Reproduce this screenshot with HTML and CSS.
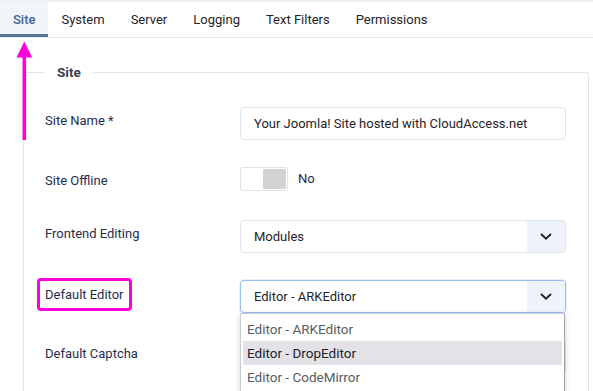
FILE: index.html
```html
<!DOCTYPE html>
<html lang="en">
<head>
<meta charset="utf-8">
<title>Global Configuration</title>
<link rel="stylesheet" href="styles.css">
</head>
<body>
<div class="topstrip"></div>
<nav class="tabs">
  <a class="tab active">Site</a>
  <a class="tab">System</a>
  <a class="tab">Server</a>
  <a class="tab">Logging</a>
  <a class="tab">Text Filters</a>
  <a class="tab">Permissions</a>
</nav>
<main class="content">
  <fieldset class="panel">
    <legend class="legend">Site</legend>
    <div class="row">
      <label class="lbl">Site Name *</label>
      <div class="field">Your Joomla! Site hosted with CloudAccess.net</div>
    </div>
    <div class="row row-toggle">
      <label class="lbl">Site Offline</label>
      <div class="switch-wrap">
        <span class="switch"><span class="knob"></span></span>
        <span class="switch-text">No</span>
      </div>
    </div>
    <div class="row">
      <label class="lbl">Frontend Editing</label>
      <div class="select"><span class="val">Modules</span><span class="caret"><svg width="14" height="9" viewBox="0 0 14 9"><path d="M2 2 L7 6.8 L12 2" fill="none" stroke="#1d2430" stroke-width="1.9"/></svg></span></div>
    </div>
    <div class="row">
      <label class="lbl"><span class="annot">Default Editor</span></label>
      <div class="select-holder">
        <div class="select focus"><span class="val">Editor - ARKEditor</span><span class="caret"><svg width="14" height="9" viewBox="0 0 14 9"><path d="M2 2 L7 6.8 L12 2" fill="none" stroke="#1d2430" stroke-width="1.9"/></svg></span></div>
        <ul class="menu">
          <li class="opt">Editor - ARKEditor</li>
          <li class="opt hover">Editor - DropEditor</li>
          <li class="opt">Editor - CodeMirror</li>
        </ul>
      </div>
    </div>
    <div class="row">
      <label class="lbl">Default Captcha</label>
      <div class="select"><span class="val"></span><span class="caret"></span></div>
    </div>
  </fieldset>
</main>
<svg class="arrow" width="40" height="150" viewBox="0 0 40 150">
  <line x1="24.3" y1="54" x2="24.3" y2="140" stroke="#ff00dc" stroke-width="3.6"/>
  <polygon points="24.3,41.5 16.5,57.5 32.2,57.5" fill="#ff00dc"/>
</svg>
</body>
</html>
```

FILE: styles.css
```css
html, body {
  margin: 0;
  padding: 0;
}
body {
  font-family: Roboto, "Noto Sans", sans-serif;
  font-size: 13px;
  color: #22314f;
  background: #ffffff;
  overflow: hidden;
  position: relative;
  height: 391px;
}
.topstrip {
  height: 2px;
  background: #eef1f6;
}
.tabs {
  display: flex;
  border-bottom: 1px solid #e4e9f1;
}
.tab {
  display: block;
  height: 35px;
  line-height: 35px;
  padding: 0 13px;
  color: #1f2329;
  text-decoration: none;
}
.tab.active {
  background: #f1f4f9;
  color: #45638f;
  font-weight: 500;
  box-shadow: inset 0 -3px 0 #5b7495;
}
.content {
  padding: 24px 4px 0 23px;
}
.panel {
  margin: 0;
  border: 1px solid #dfe5ee;
  border-bottom: none;
  border-radius: 3px 3px 0 0;
  padding: 25px 22px 0 21px;
  min-height: 330px;
  min-width: 0;
}
.legend {
  padding: 0 12px;
  font-weight: 700;
  font-size: 13.5px;
  line-height: 20px;
  color: #363f4c;
}
.row {
  display: grid;
  grid-template-columns: 195px 1fr;
  align-items: start;
  margin-bottom: 27px;
}
.row-toggle {
  min-height: 26px;
}
.lbl {
  display: block;
  padding-top: 3px;
  line-height: 21px;
  height: 21px;
  color: #1f2e4d;
}
.annot {
  display: inline-block;
  vertical-align: top;
  margin: -5px -8px 0;
  padding: 5px;
  line-height: 17px;
  border: 3px solid #ff00dc;
  border-radius: 4px;
}
.field {
  box-sizing: border-box;
  height: 33px;
  border: 1px solid #dfe3eb;
  border-radius: 4px;
  padding: 0 13px;
  line-height: 31px;
  color: #1f232b;
  white-space: nowrap;
  overflow: hidden;
}
.switch-wrap {
  display: flex;
  align-items: center;
  gap: 10px;
}
.switch {
  box-sizing: border-box;
  width: 48px;
  height: 24px;
  border: 1px solid #dde3ec;
  border-radius: 3px;
  background: #ffffff;
  display: flex;
  justify-content: flex-end;
  padding: 1px;
}
.knob {
  width: 23px;
  height: 100%;
  background: #d3d3d3;
  border-radius: 1px;
}
.switch-text {
  color: #1d2a47;
  line-height: 24px;
}
.select-holder {
  position: relative;
}
.select {
  box-sizing: border-box;
  height: 33px;
  border: 1px solid #dfe3eb;
  border-radius: 4px;
  display: flex;
  overflow: hidden;
  background: #ffffff;
}
.select.focus {
  border-color: #96c0f2;
  box-shadow: 0 0 0 1px rgba(150, 192, 242, 0.25);
}
.val {
  flex: 1;
  padding: 0 13px;
  line-height: 31px;
  color: #1f232b;
  white-space: nowrap;
}
.caret {
  width: 38px;
  background: #eef3fa;
  display: flex;
  align-items: center;
  justify-content: center;
}
.menu {
  position: absolute;
  top: 100%;
  left: 0;
  right: 1px;
  margin: 0;
  padding: 3px 0 6px;
  list-style: none;
  background: #ffffff;
  border: 1px solid #c9ccd2;
  border-right-color: #9ea2a8;
  box-shadow: 0 2px 6px rgba(0, 0, 0, 0.18);
  z-index: 2;
}
.opt {
  height: 24px;
  line-height: 24px;
  margin: 0 2px;
  padding: 0 4px;
  font-size: 13.5px;
  color: #595d63;
  white-space: nowrap;
}
.opt.hover {
  background: #e2e2e7;
  color: #1f2328;
}
.arrow {
  position: absolute;
  left: 0;
  top: 0;
  z-index: 3;
}
```
